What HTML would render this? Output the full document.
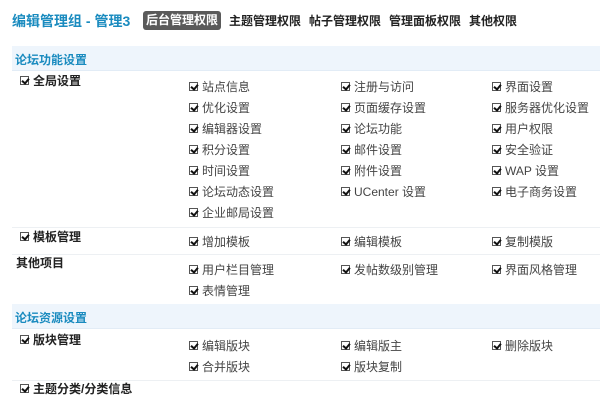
<!DOCTYPE html>
<html><head><meta charset="utf-8"><style>
*{margin:0;padding:0;box-sizing:border-box}
body{width:600px;height:407px;background:#fff;position:relative;overflow:hidden;font-family:"Liberation Sans","Noto Sans CJK SC",sans-serif;font-size:12px;color:#333}
.a{position:absolute;white-space:nowrap;line-height:14px}
.cb{display:inline-block;width:9px;height:9px;border:1px solid #555;position:relative;vertical-align:middle;margin-right:4px;top:-1px;background:#fff}
.cb:after{content:"";position:absolute;left:2px;top:0px;width:3px;height:5px;border:solid #111;border-width:0 2px 2px 0;transform:rotate(40deg)}
.hd{position:absolute;left:12px;right:0;height:25px;background:#eef5fc;border-bottom:1px solid #e2ecf6}
.hd span{position:absolute;left:3px;top:5px;color:#1a8bbf;font-weight:bold;font-size:12px}
.ln{position:absolute;left:12px;right:0;height:1px;background:#edf0f3}
.b{font-weight:bold;color:#222}
.t{color:#444}
</style></head><body>
<div class="a" style="left:12px;top:12px;font-size:14px;font-weight:bold;color:#1a8bbf;line-height:18px">编辑管理组 - 管理3</div>
<div class="a" style="left:143px;top:11px;width:78px;height:19px;background:#5a5a5a;border-radius:3px;color:#fff;font-weight:bold;text-align:center;line-height:19px">后台管理权限</div>
<div class="a b" style="left:229px;top:14px">主题管理权限</div>
<div class="a b" style="left:309px;top:14px">帖子管理权限</div>
<div class="a b" style="left:389px;top:14px">管理面板权限</div>
<div class="a b" style="left:469px;top:14px">其他权限</div>

<div class="hd" style="top:46px"><span>论坛功能设置</span></div>
<div class="a b" style="left:20px;top:74px"><i class="cb"></i>全局设置</div>

<div class="a t" style="left:189px;top:80px"><i class="cb"></i>站点信息</div>
<div class="a t" style="left:341px;top:80px"><i class="cb"></i>注册与访问</div>
<div class="a t" style="left:492px;top:80px"><i class="cb"></i>界面设置</div>
<div class="a t" style="left:189px;top:101px"><i class="cb"></i>优化设置</div>
<div class="a t" style="left:341px;top:101px"><i class="cb"></i>页面缓存设置</div>
<div class="a t" style="left:492px;top:101px"><i class="cb"></i>服务器优化设置</div>
<div class="a t" style="left:189px;top:122px"><i class="cb"></i>编辑器设置</div>
<div class="a t" style="left:341px;top:122px"><i class="cb"></i>论坛功能</div>
<div class="a t" style="left:492px;top:122px"><i class="cb"></i>用户权限</div>
<div class="a t" style="left:189px;top:143px"><i class="cb"></i>积分设置</div>
<div class="a t" style="left:341px;top:143px"><i class="cb"></i>邮件设置</div>
<div class="a t" style="left:492px;top:143px"><i class="cb"></i>安全验证</div>
<div class="a t" style="left:189px;top:164px"><i class="cb"></i>时间设置</div>
<div class="a t" style="left:341px;top:164px"><i class="cb"></i>附件设置</div>
<div class="a t" style="left:492px;top:164px"><i class="cb"></i>WAP 设置</div>
<div class="a t" style="left:189px;top:185px"><i class="cb"></i>论坛动态设置</div>
<div class="a t" style="left:341px;top:185px"><i class="cb"></i>UCenter 设置</div>
<div class="a t" style="left:492px;top:185px"><i class="cb"></i>电子商务设置</div>
<div class="a t" style="left:189px;top:206px"><i class="cb"></i>企业邮局设置</div>

<div class="ln" style="top:227px"></div>
<div class="a b" style="left:20px;top:230px"><i class="cb"></i>模板管理</div>
<div class="a t" style="left:189px;top:235px"><i class="cb"></i>增加模板</div>
<div class="a t" style="left:341px;top:235px"><i class="cb"></i>编辑模板</div>
<div class="a t" style="left:492px;top:235px"><i class="cb"></i>复制模版</div>

<div class="ln" style="top:254px"></div>
<div class="a b" style="left:16px;top:256px">其他项目</div>
<div class="a t" style="left:189px;top:263px"><i class="cb"></i>用户栏目管理</div>
<div class="a t" style="left:341px;top:263px"><i class="cb"></i>发帖数级别管理</div>
<div class="a t" style="left:492px;top:263px"><i class="cb"></i>界面风格管理</div>
<div class="a t" style="left:189px;top:284px"><i class="cb"></i>表情管理</div>

<div class="hd" style="top:304px"><span>论坛资源设置</span></div>
<div class="a b" style="left:20px;top:333px"><i class="cb"></i>版块管理</div>
<div class="a t" style="left:189px;top:339px"><i class="cb"></i>编辑版块</div>
<div class="a t" style="left:341px;top:339px"><i class="cb"></i>编辑版主</div>
<div class="a t" style="left:492px;top:339px"><i class="cb"></i>删除版块</div>
<div class="a t" style="left:189px;top:360px"><i class="cb"></i>合并版块</div>
<div class="a t" style="left:341px;top:360px"><i class="cb"></i>版块复制</div>

<div class="ln" style="top:380px"></div>
<div class="a b" style="left:20px;top:382px"><i class="cb"></i>主题分类/分类信息</div>
</body></html>
